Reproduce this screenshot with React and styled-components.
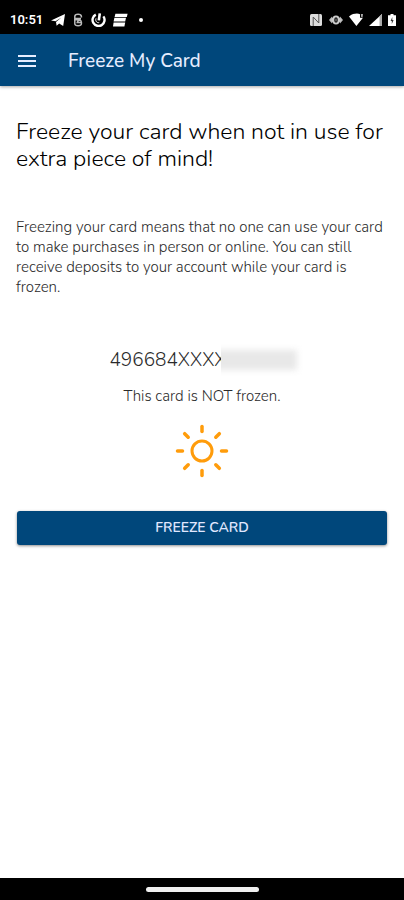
import React from 'react';
import styled, { createGlobalStyle } from 'styled-components';

const GlobalStyle = createGlobalStyle`
  *, *::before, *::after { box-sizing: border-box; }
  body {
    margin: 0;
    background: #fff;
    color: #2a2a2a;
    font-family: Nunito, "Noto Sans", "Open Sans", sans-serif;
  }
`;

const Screen = styled.div`
  display: flex;
  flex-direction: column;
  min-height: 100vh;
`;

const StatusBar = styled.div`
  display: flex;
  align-items: center;
  justify-content: space-between;
  height: 34px;
  padding: 5px 7px 0 10px;
  background: #000;
  color: #fff;
`;

const StatusGroup = styled.div`
  display: flex;
  align-items: center;
  gap: ${({ $gap }) => $gap}px;
`;

const Clock = styled.time`
  margin-right: 1px;
  font-family: Roboto, sans-serif;
  font-size: 13px;
  line-height: 16px;
  font-weight: 600;
`;

const StatusIcon = styled.svg`
  display: block;
  flex: none;
  width: ${({ $w }) => $w}px;
  height: 14px;
`;

const AppBar = styled.header`
  display: flex;
  align-items: center;
  gap: 32px;
  height: 52px;
  padding: 2px 18px 0;
  background: #00477b;
  color: #e6edff;
  box-shadow: 0 1px 3px rgba(0, 0, 0, 0.35);
`;

const MenuButton = styled.button`
  display: flex;
  padding: 0;
  border: 0;
  background: none;
  color: inherit;
  cursor: pointer;
`;

const Title = styled.h1`
  margin: 0;
  font-size: 19px;
  line-height: 24px;
  font-weight: 500;
`;

const Content = styled.main`
  display: flex;
  flex: 1;
  flex-direction: column;
  padding: 32px 16px;
`;

const Headline = styled.h2`
  margin: 0 0 45px;
  font-size: 23px;
  line-height: 27px;
  font-weight: 300;
  color: #000;
`;

const Description = styled.p`
  margin: 0 0 51px;
  font-size: 15px;
  line-height: 20px;
  font-weight: 300;
`;

const CardStatus = styled.section`
  display: flex;
  flex-direction: column;
  align-items: center;
`;

const CardNumber = styled.div`
  position: relative;
  padding-right: 68px;
  font-size: 19px;
  line-height: 24px;
  font-weight: 300;
`;

const RedactedDigits = styled.span`
  position: absolute;
  top: -4px;
  right: -8px;
  width: 82px;
  height: 32px;
  overflow: hidden;
  background: #fff;

  &::before {
    content: "";
    position: absolute;
    inset: 6px 6px 6px -8px;
    background: #e8e8e8;
    filter: blur(3px);
  }
`;

const StatusText = styled.p`
  margin: 14px 0 18px;
  font-size: 15px;
  line-height: 20px;
  font-weight: 300;
`;

const SunIcon = styled.svg`
  display: block;
  width: 54px;
  height: 54px;
  margin-bottom: 33px;
`;

const FreezeButton = styled.button`
  margin: 0 1px;
  height: 34px;
  padding: 0 16px;
  border: 0;
  border-radius: 3px;
  background: #00477b;
  color: #e0e8ff;
  font-family: inherit;
  font-size: 14px;
  line-height: 20px;
  font-weight: 600;
  text-transform: uppercase;
  cursor: pointer;
  box-shadow: 0 1px 3px rgba(0, 0, 0, 0.45);
`;

const NavigationBar = styled.footer`
  display: flex;
  align-items: center;
  justify-content: center;
  height: 22px;
  background: #000;
`;

const HomeHandle = styled.div`
  width: 113px;
  height: 5px;
  border-radius: 3px;
  background: #f0f0f0;
`;

const RAYS = [0, 45, 90, 135, 180, 225, 270, 315];

function LeftStatus() {
  return (
    <StatusGroup $gap={7}>
      <Clock>10:51</Clock>
      <StatusIcon $w={14} viewBox="0 0 14 14" fill="#fff" aria-hidden="true">
        <path d="M0 7.6 14 1l-1.800 12-4-2.600-2.600 2.400-.6-3.800 5.400-4.600-5.800 3.800z" />
      </StatusIcon>
      <StatusIcon $w={12} viewBox="0 0 12 14" fill="none" stroke="#bbb" strokeWidth="1.5" aria-hidden="true">
        <path d="M9.400 4.600V3.400C9 .6 3 .6 2.800 3.400V5.400H9M2 6.800h6.800M2.800 7v4c.3 2.400 6.300 2.400 6.600 0V9C9 6.600 5.800 6.800 5.200 9.600h3.600" />
      </StatusIcon>
      <StatusIcon $w={15} viewBox="0 0 15 14" fill="none" stroke="#fff" aria-hidden="true">
        <path d="M4.8 1.6a6 6 0 1 0 7.6 1.8" strokeWidth="2.4" />
        <path d="M8.800.4 7.800 7.400" strokeWidth="2.6" />
        <path d="M5 5.4c-1 3 1.200 4.600 3.200 4.200" strokeWidth="1" />
      </StatusIcon>
      <StatusIcon $w={15} viewBox="0 0 15 14" fill="#fff" aria-hidden="true">
        <path d="M2.400.800H14.600L13.800 4H1.600zM1.400 4.800H13L12.200 8.400H.600z" />
        <path d="M.600 9.400H12.200L11.400 13.400H0z" />
      </StatusIcon>
      <StatusIcon $w={18} viewBox="0 0 18 14" fill="#fff" aria-hidden="true">
        <circle cx="6" cy="7" r="2" />
      </StatusIcon>
    </StatusGroup>
  );
}

function RightStatus() {
  return (
    <StatusGroup $gap={5}>
      <StatusIcon $w={14} viewBox="0 0 14 14" aria-hidden="true">
        <rect x="1" y="1" width="12" height="12" rx="1.500" fill="#ddd" />
        <path d="M4.200 13V4l5.600 6V1" fill="none" stroke="#555" strokeWidth="1" />
      </StatusIcon>
      <StatusIcon $w={16} viewBox="0 0 16 14" aria-hidden="true">
        <path d="M1 7 4 3.600v6.800zM15 7l-3-3.400v6.800z" fill="#bbb" />
        <path d="M8 2.400c2.400 0 4 2 4.600 4.600-.6 2.600-2.200 4.600-4.600 4.600S4 9.600 3.400 7C4 4.400 5.600 2.400 8 2.400z" fill="#ccc" />
        <ellipse cx="8" cy="7" rx="1.800" ry="2.800" fill="#111" />
        <path d="M8 5.600v2.800" stroke="#999" />
      </StatusIcon>
      <StatusIcon $w={15} viewBox="0 0 15 14" fill="#fff" aria-hidden="true">
        <path d="M0 3.400C4 .200 9 .200 11 1.200v3.600h3L7.400 13z" />
        <path d="M11.800 1h2.200l-.4 3h-1.400z" fill="#aaa" />
      </StatusIcon>
      <StatusIcon $w={13} viewBox="0 0 13 14" aria-hidden="true">
        <path d="M0 13 13 1v12z" fill="#fff" />
        <path d="M10.500 3.300 13 1v12h-2.500z" fill="#aaa" />
      </StatusIcon>
      <StatusIcon $w={10} viewBox="0 0 10 14" aria-hidden="true">
        <path d="M3.500 1h3v1.300H9V13H1V2.300h2.500z" fill="#fff" />
        <path d="M5.300 4 3.600 8h1.200v3l1.800-4H5.300z" fill="#333" />
      </StatusIcon>
    </StatusGroup>
  );
}

export default function App() {
  return (
    <Screen>
      <GlobalStyle />
      <StatusBar>
        <LeftStatus />
        <RightStatus />
      </StatusBar>
      <AppBar>
        <MenuButton type="button" aria-label="Menu">
          <svg width="18" height="14" viewBox="0 0 18 14" fill="currentColor" aria-hidden="true">
            <path d="M0 1h18v2H0zM0 6h18v2H0zM0 11h18v2H0z" />
          </svg>
        </MenuButton>
        <Title>Freeze My Card</Title>
      </AppBar>
      <Content>
        <Headline>Freeze your card when not in use for extra piece of mind!</Headline>
        <Description>
          Freezing your card means that no one can use your card to make purchases in person or
          online. You can still receive deposits to your account while your card is frozen.
        </Description>
        <CardStatus>
          <CardNumber>
            496684XXXX
            <RedactedDigits aria-hidden="true" />
          </CardNumber>
          <StatusText>This card is NOT frozen.</StatusText>
          <SunIcon viewBox="0 0 54 54" fill="none" stroke="#ff9c0b" strokeWidth="3" aria-hidden="true">
            <circle cx="27" cy="27" r="10" />
            {RAYS.map((angle) => (
              <path key={angle} d="M27 2.500v5" strokeWidth="3.500" strokeLinecap="round" transform={`rotate(${angle} 27 27)`} />
            ))}
          </SunIcon>
        </CardStatus>
        <FreezeButton type="button">Freeze card</FreezeButton>
      </Content>
      <NavigationBar>
        <HomeHandle />
      </NavigationBar>
    </Screen>
  );
}
